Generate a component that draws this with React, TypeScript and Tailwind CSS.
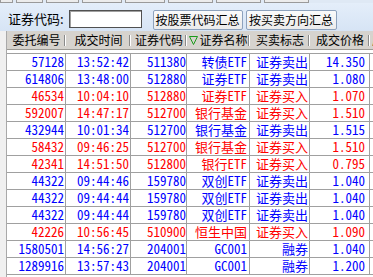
import React from "react";

type Row = [string, string, string, string, string, string, "b" | "r"];

const rows: Row[] = [
  ["57128", "13:52:42", "511380", "转债ETF", "证券卖出", "14.350", "b"],
  ["614806", "13:48:00", "512880", "证券ETF", "证券卖出", "1.080", "b"],
  ["46534", "10:04:10", "512880", "证券ETF", "证券买入", "1.070", "r"],
  ["592007", "14:47:17", "512700", "银行基金", "证券买入", "1.510", "r"],
  ["432944", "10:01:34", "512700", "银行基金", "证券卖出", "1.515", "b"],
  ["58432", "09:46:25", "512700", "银行基金", "证券买入", "1.510", "r"],
  ["42341", "14:51:50", "512800", "银行ETF", "证券买入", "0.795", "r"],
  ["44322", "09:44:46", "159780", "双创ETF", "证券卖出", "1.040", "b"],
  ["44322", "09:44:44", "159780", "双创ETF", "证券卖出", "1.040", "b"],
  ["44322", "09:44:44", "159780", "双创ETF", "证券卖出", "1.040", "b"],
  ["42226", "10:56:45", "510900", "恒生中国", "证券买入", "1.090", "r"],
  ["1580501", "14:56:27", "204001", "GC001", "融券", "1.040", "b"],
  ["1289916", "13:57:43", "204001", "GC001", "融券", "1.200", "b"],
];

const headers = ["委托编号", "成交时间", "证券代码", "证券名称", "买卖标志", "成交价格"];
const widths = ["w-[59px]", "w-[65px]", "w-[56px]", "w-[63px]", "w-[60px]", "w-[60px]"];
const pads = ["pr-[1px]", "pr-[1px]", "pr-0", "pr-[2px]", "pr-[1px]", "pr-[4px]"];

const topBoxes = [13, 27, 33, 40, 40, 45, 45, 45];

export default function App() {
  return (
    <div
      className="w-[373px] h-[277px] overflow-hidden bg-white flex flex-col"
      style={{ fontFamily: '"Noto Sans CJK SC", "Liberation Sans", sans-serif' }}
    >
      {/* top strip */}
      <div className="h-[3px] flex gap-[3px] bg-[#dfe9f5] shrink-0">
        {topBoxes.map((w, i) => (
          <div key={i} style={{ width: w }} className="h-[3px] bg-[#ececec] border-b border-x border-[#9a9a9a]" />
        ))}
      </div>
      {/* toolbar */}
      <div className="h-[28px] shrink-0 flex items-start bg-gradient-to-b from-[#e4eefa] to-[#d6e4f5] pl-[8px]">
        <div className="mt-[7px] h-[18px] leading-[18px] text-[13px] text-black whitespace-nowrap">证券代码:</div>
        <div className="ml-[5px] mt-[7px] w-[73px] h-[18px] bg-white border border-[#505050] shadow-[inset_1px_1px_0_#a0a0a0]" />
        <button className="ml-[11px] mt-[7px] w-[90px] h-[20px] rounded-[2px] border border-[#8da2bd] bg-gradient-to-b from-[#fbfbfb] to-[#ebebeb] text-[12px] leading-[18px] text-black whitespace-nowrap">
          按股票代码汇总
        </button>
        <button className="ml-[3px] mt-[7px] w-[91px] h-[20px] rounded-[2px] border border-[#8da2bd] bg-gradient-to-b from-[#fbfbfb] to-[#ebebeb] text-[12px] leading-[18px] text-black whitespace-nowrap">
          按买卖方向汇总
        </button>
      </div>
      {/* body */}
      <div className="flex-1 flex min-h-0">
        <div className="w-[7px] shrink-0 bg-[#f0f0f0] border-r border-[#a9a9a9]" />
        <div className="flex-1 overflow-hidden flex flex-col">
          {/* header */}
          <div className="h-[19px] shrink-0 flex bg-[#d6d3ce] border-b border-[#9c9a94] whitespace-nowrap">
            {headers.map((h, i) => (
              <div key={i} className={`${widths[i]} shrink-0 relative flex items-center justify-center text-[12px] leading-[18px] text-black`}>
                {i === 3 && (
                  <svg width="9" height="9" viewBox="0 0 9 9" className="mr-[1px]">
                    <path d="M0.5 0.5 H8.5 L4.5 8.5 Z" fill="none" stroke="#1a9a1a" strokeWidth="1" />
                  </svg>
                )}
                <span>{h}</span>
                <div className="absolute right-0 top-[4px] h-[11px] w-[2px] border-l border-[#8a8a8a] border-r border-r-white" />
              </div>
            ))}
            <div className="w-[20px] shrink-0 pl-[2px] text-[12px] leading-[18px] text-black flex items-center">成</div>
          </div>
          <div className="h-[3px] shrink-0 bg-white" />
          {/* rows */}
          <div
            className="border-t border-[#a0a0a0] whitespace-nowrap"
            style={{ fontFamily: '"Noto Sans Mono CJK SC", "Liberation Mono", "Noto Sans CJK SC", monospace' }}
          >
            {rows.map((r, ri) => (
              <div
                key={ri}
                className={`h-[17px] flex border-b border-[#a0a0a0] text-[13px] leading-[16px] ${
                  r[6] === "b" ? "text-[#0000ff]" : "text-[#ff0000]"
                }`}
              >
                {r.slice(0, 6).map((c, ci) => (
                  <div
                    key={ci}
                    className={`${widths[ci]} ${pads[ci]} h-[16px] shrink-0 border-r border-[#a0a0a0] text-right`}
                  >
                    {c}
                  </div>
                ))}
                <div className="flex-1" />
              </div>
            ))}
          </div>
        </div>
      </div>
    </div>
  );
}
